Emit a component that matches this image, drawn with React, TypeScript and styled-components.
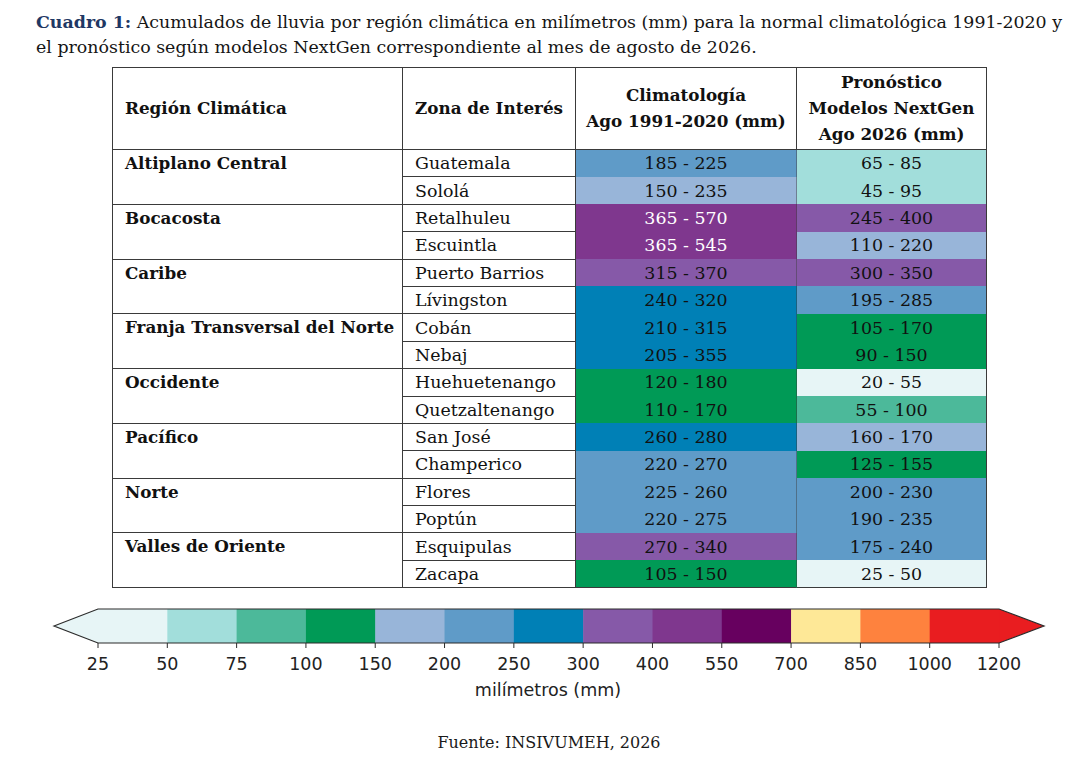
import React from "react";
import styled, { createGlobalStyle } from "styled-components";

const Global = createGlobalStyle`
  html, body { margin: 0; padding: 0; background: #ffffff; }
  body { font-family: "DejaVu Serif", "Liberation Serif", serif; color: #111; }
`;

const Page = styled.div`
  width: 1090px;
  height: 776px;
  box-sizing: border-box;
  padding-top: 10px;
  display: flex;
  flex-direction: column;
`;

const Caption = styled.p`
  margin: 0 0 0 36px;
  font-size: 17.4px;
  line-height: 25px;
  color: #151515;
  white-space: nowrap;
`;

const CaptionLabel = styled.span`
  font-weight: bold;
  color: #1f3864;
`;

const TableWrap = styled.div`
  margin: 7px 0 0 112px;
`;

const Table = styled.table`
  border-collapse: collapse;
  width: 875px;
  table-layout: fixed;
  font-size: 17.4px;
  border: 1px solid #3a3a3a;
  color: #111;
`;

const HeadCell = styled.th<{ $align?: string }>`
  height: 79px;
  padding: 0 0 2px 12px;
  border: 1px solid #3a3a3a;
  text-align: ${(p) => p.$align || "left"};
  font-weight: bold;
  font-size: 16.8px;
  line-height: 26px;
  vertical-align: middle;
  white-space: nowrap;
  ${(p) => (p.$align === "center" ? "padding: 0 0 2px 0;" : "")}
`;

const Row = styled.tr`
  height: 27.4px;
`;

const RegionCell = styled.td`
  padding: 0 0 0 12px;
  border: 1px solid #3a3a3a;
  font-weight: bold;
  font-size: 16.8px;
  vertical-align: top;
  line-height: 26px;
  white-space: nowrap;
`;

const ZoneCell = styled.td`
  padding: 0 0 0 12px;
  border: 1px solid #3a3a3a;
  line-height: 26px;
  white-space: nowrap;
`;

const ValueCell = styled.td<{ $bg: string; $fg?: string; $sep?: boolean }>`
  padding: 0;
  text-align: center;
  line-height: 26px;
  white-space: nowrap;
  background: ${(p) => p.$bg};
  color: ${(p) => p.$fg || "#111"};
  border-top: none;
  border-bottom: none;
  ${(p) => (p.$sep ? "border-left: 1px solid rgba(60,60,60,0.45);" : "")}
`;

const Legend = styled.svg`
  display: block;
  margin-top: 12px;
`;

const Source = styled.div`
  margin-top: 29px;
  text-align: center;
  font-size: 16px;
  color: #1a1a1a;
  padding-left: 8px;
`;

const C = {
  c25: "#e7f5f6",
  c50: "#a2dedb",
  c75: "#4cb99a",
  c100: "#009a56",
  c150: "#98b5d9",
  c200: "#5f9bc8",
  c250: "#0080b6",
  c300: "#8659a8",
  c400: "#7f378e",
  c550: "#67005f",
  c700: "#fee897",
  c850: "#fe823e",
  c1000: "#e91d20",
};

type Zone = { name: string; clim: string; climBg: string; climFg?: string; fc: string; fcBg: string };
type Region = { name: string; zones: Zone[] };

const data: Region[] = [
  {
    name: "Altiplano Central",
    zones: [
      { name: "Guatemala", clim: "185 - 225", climBg: C.c200, fc: "65 - 85", fcBg: C.c50 },
      { name: "Sololá", clim: "150 - 235", climBg: C.c150, fc: "45 - 95", fcBg: C.c50 },
    ],
  },
  {
    name: "Bocacosta",
    zones: [
      { name: "Retalhuleu", clim: "365 - 570", climBg: C.c400, climFg: "#ffffff", fc: "245 - 400", fcBg: C.c300 },
      { name: "Escuintla", clim: "365 - 545", climBg: C.c400, climFg: "#ffffff", fc: "110 - 220", fcBg: C.c150 },
    ],
  },
  {
    name: "Caribe",
    zones: [
      { name: "Puerto Barrios", clim: "315 - 370", climBg: C.c300, fc: "300 - 350", fcBg: C.c300 },
      { name: "Lívingston", clim: "240 - 320", climBg: C.c250, fc: "195 - 285", fcBg: C.c200 },
    ],
  },
  {
    name: "Franja Transversal del Norte",
    zones: [
      { name: "Cobán", clim: "210 - 315", climBg: C.c250, fc: "105 - 170", fcBg: C.c100 },
      { name: "Nebaj", clim: "205 - 355", climBg: C.c250, fc: "90 - 150", fcBg: C.c100 },
    ],
  },
  {
    name: "Occidente",
    zones: [
      { name: "Huehuetenango", clim: "120 - 180", climBg: C.c100, fc: "20 - 55", fcBg: C.c25 },
      { name: "Quetzaltenango", clim: "110 - 170", climBg: C.c100, fc: "55 - 100", fcBg: C.c75 },
    ],
  },
  {
    name: "Pacífico",
    zones: [
      { name: "San José", clim: "260 - 280", climBg: C.c250, fc: "160 - 170", fcBg: C.c150 },
      { name: "Champerico", clim: "220 - 270", climBg: C.c200, fc: "125 - 155", fcBg: C.c100 },
    ],
  },
  {
    name: "Norte",
    zones: [
      { name: "Flores", clim: "225 - 260", climBg: C.c200, fc: "200 - 230", fcBg: C.c200 },
      { name: "Poptún", clim: "220 - 275", climBg: C.c200, fc: "190 - 235", fcBg: C.c200 },
    ],
  },
  {
    name: "Valles de Oriente",
    zones: [
      { name: "Esquipulas", clim: "270 - 340", climBg: C.c300, fc: "175 - 240", fcBg: C.c200 },
      { name: "Zacapa", clim: "105 - 150", climBg: C.c100, fc: "25 - 50", fcBg: C.c25 },
    ],
  },
];

const bands = [C.c25, C.c50, C.c75, C.c100, C.c150, C.c200, C.c250, C.c300, C.c400, C.c550, C.c700, C.c850, C.c1000];
const ticks = ["25", "50", "75", "100", "150", "200", "250", "300", "400", "550", "700", "850", "1000", "1200"];

function ColorBar() {
  const x0 = 98;
  const x1 = 999;
  const top = 9;
  const bot = 43;
  const step = (x1 - x0) / bands.length;
  const mid = (top + bot) / 2;
  return (
    <Legend width={1090} height={104} viewBox="0 0 1090 104">
      <polygon points={`${x0},${top} 54,${mid} ${x0},${bot}`} fill={C.c25} />
      <polygon points={`${x1},${top} 1044,${mid} ${x1},${bot}`} fill={C.c1000} />
      {bands.map((c, i) => (
        <rect key={i} x={x0 + i * step} y={top} width={step + 0.5} height={bot - top} fill={c} />
      ))}
      <polygon
        points={`54,${mid} ${x0},${top} ${x1},${top} 1044,${mid} ${x1},${bot} ${x0},${bot}`}
        fill="none"
        stroke="#2b2b2b"
        strokeWidth={1.2}
      />
      {ticks.map((t, i) => (
        <g key={t}>
          <line x1={x0 + i * step} x2={x0 + i * step} y1={bot} y2={bot + 5} stroke="#2b2b2b" strokeWidth={1} />
          <text
            x={x0 + i * step}
            y={bot + 27}
            textAnchor="middle"
            fontFamily="'DejaVu Sans', sans-serif"
            fontSize={17.5}
            fill="#222"
          >
            {t}
          </text>
        </g>
      ))}
      <text x={548} y={96} textAnchor="middle" fontFamily="'DejaVu Sans', sans-serif" fontSize={17.5} fill="#222">
        milímetros (mm)
      </text>
    </Legend>
  );
}

export default function App() {
  return (
    <Page>
      <Global />
      <Caption>
        <CaptionLabel>Cuadro 1:</CaptionLabel> Acumulados de lluvia por región climática en milímetros (mm) para la
        normal climatológica 1991-2020 y
        <br />
        el pronóstico según modelos NextGen correspondiente al mes de agosto de 2026.
      </Caption>
      <TableWrap>
        <Table>
          <colgroup>
            <col style={{ width: 290 }} />
            <col style={{ width: 173 }} />
            <col style={{ width: 221 }} />
            <col style={{ width: 190 }} />
          </colgroup>
          <thead>
            <tr>
              <HeadCell>Región Climática</HeadCell>
              <HeadCell>Zona de Interés</HeadCell>
              <HeadCell $align="center">
                Climatología
                <br />
                Ago 1991-2020 (mm)
              </HeadCell>
              <HeadCell $align="center">
                Pronóstico
                <br />
                Modelos NextGen
                <br />
                Ago 2026 (mm)
              </HeadCell>
            </tr>
          </thead>
          <tbody>
            {data.map((r) =>
              r.zones.map((z, i) => (
                <Row key={r.name + z.name}>
                  {i === 0 && <RegionCell rowSpan={r.zones.length}>{r.name}</RegionCell>}
                  <ZoneCell>{z.name}</ZoneCell>
                  <ValueCell $bg={z.climBg} $fg={z.climFg}>
                    {z.clim}
                  </ValueCell>
                  <ValueCell $bg={z.fcBg} $sep>
                    {z.fc}
                  </ValueCell>
                </Row>
              ))
            )}
          </tbody>
        </Table>
      </TableWrap>
      <ColorBar />
      <Source>Fuente: INSIVUMEH, 2026</Source>
    </Page>
  );
}
